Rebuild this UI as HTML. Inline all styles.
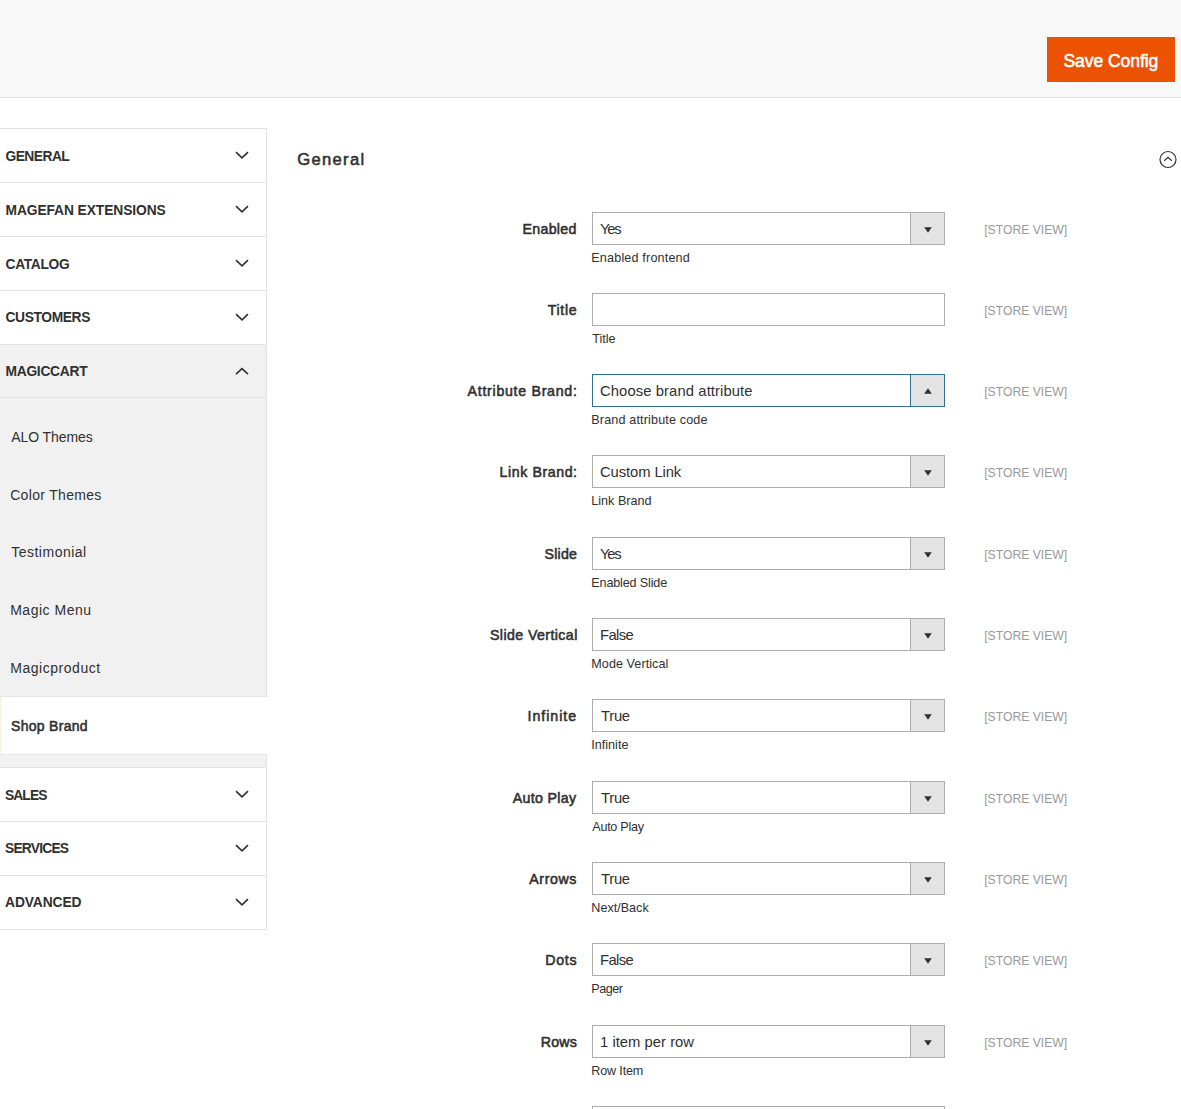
<!DOCTYPE html>
<html><head><meta charset="utf-8"><style>
html,body{margin:0;padding:0;width:1181px;height:1109px;overflow:hidden;background:#fff;font-family:"Liberation Sans", sans-serif;}
</style></head><body>
<div style="position:absolute;left:0;top:0;width:1181px;height:97px;background:#f8f8f8;border-bottom:1px solid #e3e3e3"></div>
<div style="position:absolute;left:1047px;top:37px;width:128px;height:45px;background:#eb5202"></div>
<div style="position:absolute;left:0;top:128px;width:266px;height:53px;border-top:1px solid #e3e3e3;border-right:1px solid #e3e3e3;background:#fff"></div>
<div style="position:absolute;left:234.5px;top:151px;width:14px;height:9px"><svg style="display:block" width="14" height="9" viewBox="0 0 14 9"><path d="M1 1.2 L7 6.8 L13 1.2" fill="none" stroke="#303030" stroke-width="1.6"/></svg></div>
<div style="position:absolute;left:0;top:182px;width:266px;height:53px;border-top:1px solid #e3e3e3;border-right:1px solid #e3e3e3;background:#fff"></div>
<div style="position:absolute;left:234.5px;top:205px;width:14px;height:9px"><svg style="display:block" width="14" height="9" viewBox="0 0 14 9"><path d="M1 1.2 L7 6.8 L13 1.2" fill="none" stroke="#303030" stroke-width="1.6"/></svg></div>
<div style="position:absolute;left:0;top:236px;width:266px;height:53px;border-top:1px solid #e3e3e3;border-right:1px solid #e3e3e3;background:#fff"></div>
<div style="position:absolute;left:234.5px;top:259px;width:14px;height:9px"><svg style="display:block" width="14" height="9" viewBox="0 0 14 9"><path d="M1 1.2 L7 6.8 L13 1.2" fill="none" stroke="#303030" stroke-width="1.6"/></svg></div>
<div style="position:absolute;left:0;top:290px;width:266px;height:53px;border-top:1px solid #e3e3e3;border-right:1px solid #e3e3e3;background:#fff"></div>
<div style="position:absolute;left:234.5px;top:313px;width:14px;height:9px"><svg style="display:block" width="14" height="9" viewBox="0 0 14 9"><path d="M1 1.2 L7 6.8 L13 1.2" fill="none" stroke="#303030" stroke-width="1.6"/></svg></div>
<div style="position:absolute;left:0;top:344px;width:266px;height:53px;border-top:1px solid #e3e3e3;border-right:1px solid #e3e3e3;background:#f1f1f1"></div>
<div style="position:absolute;left:234.5px;top:366.8px;width:14px;height:9px"><svg style="display:block" width="14" height="9" viewBox="0 0 14 9"><path d="M1 7.2 L7 1.6 L13 7.2" fill="none" stroke="#303030" stroke-width="1.6"/></svg></div>
<div style="position:absolute;left:0;top:397px;width:266px;height:370px;border-top:1px solid #e3e3e3;border-right:1px solid #e3e3e3;background:#f1f1f1"></div>
<div style="position:absolute;left:0;top:696px;width:268px;height:57px;border-top:1px solid #e6e6e6;border-bottom:1px solid #e6e6e6;background:#fff"></div>
<div style="position:absolute;left:0;top:697px;width:2px;height:57px;background:#fdf3e4"></div>
<div style="position:absolute;left:0;top:767px;width:266px;height:53px;border-top:1px solid #e3e3e3;border-right:1px solid #e3e3e3;background:#fff"></div>
<div style="position:absolute;left:234.5px;top:790px;width:14px;height:9px"><svg style="display:block" width="14" height="9" viewBox="0 0 14 9"><path d="M1 1.2 L7 6.8 L13 1.2" fill="none" stroke="#303030" stroke-width="1.6"/></svg></div>
<div style="position:absolute;left:0;top:821px;width:266px;height:53px;border-top:1px solid #e3e3e3;border-right:1px solid #e3e3e3;background:#fff"></div>
<div style="position:absolute;left:234.5px;top:844px;width:14px;height:9px"><svg style="display:block" width="14" height="9" viewBox="0 0 14 9"><path d="M1 1.2 L7 6.8 L13 1.2" fill="none" stroke="#303030" stroke-width="1.6"/></svg></div>
<div style="position:absolute;left:0;top:875px;width:266px;height:53px;border-top:1px solid #e3e3e3;border-right:1px solid #e3e3e3;background:#fff"></div>
<div style="position:absolute;left:234.5px;top:898px;width:14px;height:9px"><svg style="display:block" width="14" height="9" viewBox="0 0 14 9"><path d="M1 1.2 L7 6.8 L13 1.2" fill="none" stroke="#303030" stroke-width="1.6"/></svg></div>
<div style="position:absolute;left:0;top:929px;width:267px;height:1px;background:#e3e3e3"></div>
<svg style="position:absolute;left:1158px;top:150px" width="20" height="20" viewBox="0 0 20 20"><circle cx="10" cy="9.5" r="8" fill="none" stroke="#303030" stroke-width="1.2"/><path d="M6.2 10.8 L10 7.3 L13.8 10.8" fill="none" stroke="#303030" stroke-width="1.2"/></svg>
<div style="position:absolute;left:592px;top:212px;width:351px;height:31px;border:1px solid #adadad;background:#fff"></div>
<div style="position:absolute;left:910px;top:213px;width:33px;height:31px;border-left:1px solid #adadad;background:#e3e3e3"></div>
<svg style="position:absolute;left:924px;top:226.5px" width="8" height="6" viewBox="0 0 8 6"><path d="M0.2 0.3 L7.8 0.3 L4 5.7 Z" fill="#303030"/></svg>
<div style="position:absolute;left:592px;top:293px;width:351px;height:31px;border:1px solid #adadad;background:#fff"></div>
<div style="position:absolute;left:592px;top:374px;width:351px;height:31px;border:1px solid #2f6f8f;background:#fff"></div>
<div style="position:absolute;left:910px;top:375px;width:33px;height:31px;border-left:1px solid #2f6f8f;background:#e3e3e3"></div>
<svg style="position:absolute;left:924px;top:387.5px" width="8" height="6" viewBox="0 0 8 6"><path d="M0.2 5.7 L4 0.3 L7.8 5.7 Z" fill="#303030"/></svg>
<div style="position:absolute;left:592px;top:455px;width:351px;height:31px;border:1px solid #adadad;background:#fff"></div>
<div style="position:absolute;left:910px;top:456px;width:33px;height:31px;border-left:1px solid #adadad;background:#e3e3e3"></div>
<svg style="position:absolute;left:924px;top:469.5px" width="8" height="6" viewBox="0 0 8 6"><path d="M0.2 0.3 L7.8 0.3 L4 5.7 Z" fill="#303030"/></svg>
<div style="position:absolute;left:592px;top:537px;width:351px;height:31px;border:1px solid #adadad;background:#fff"></div>
<div style="position:absolute;left:910px;top:538px;width:33px;height:31px;border-left:1px solid #adadad;background:#e3e3e3"></div>
<svg style="position:absolute;left:924px;top:551.5px" width="8" height="6" viewBox="0 0 8 6"><path d="M0.2 0.3 L7.8 0.3 L4 5.7 Z" fill="#303030"/></svg>
<div style="position:absolute;left:592px;top:618px;width:351px;height:31px;border:1px solid #adadad;background:#fff"></div>
<div style="position:absolute;left:910px;top:619px;width:33px;height:31px;border-left:1px solid #adadad;background:#e3e3e3"></div>
<svg style="position:absolute;left:924px;top:632.5px" width="8" height="6" viewBox="0 0 8 6"><path d="M0.2 0.3 L7.8 0.3 L4 5.7 Z" fill="#303030"/></svg>
<div style="position:absolute;left:592px;top:699px;width:351px;height:31px;border:1px solid #adadad;background:#fff"></div>
<div style="position:absolute;left:910px;top:700px;width:33px;height:31px;border-left:1px solid #adadad;background:#e3e3e3"></div>
<svg style="position:absolute;left:924px;top:713.5px" width="8" height="6" viewBox="0 0 8 6"><path d="M0.2 0.3 L7.8 0.3 L4 5.7 Z" fill="#303030"/></svg>
<div style="position:absolute;left:592px;top:781px;width:351px;height:31px;border:1px solid #adadad;background:#fff"></div>
<div style="position:absolute;left:910px;top:782px;width:33px;height:31px;border-left:1px solid #adadad;background:#e3e3e3"></div>
<svg style="position:absolute;left:924px;top:795.5px" width="8" height="6" viewBox="0 0 8 6"><path d="M0.2 0.3 L7.8 0.3 L4 5.7 Z" fill="#303030"/></svg>
<div style="position:absolute;left:592px;top:862px;width:351px;height:31px;border:1px solid #adadad;background:#fff"></div>
<div style="position:absolute;left:910px;top:863px;width:33px;height:31px;border-left:1px solid #adadad;background:#e3e3e3"></div>
<svg style="position:absolute;left:924px;top:876.5px" width="8" height="6" viewBox="0 0 8 6"><path d="M0.2 0.3 L7.8 0.3 L4 5.7 Z" fill="#303030"/></svg>
<div style="position:absolute;left:592px;top:943px;width:351px;height:31px;border:1px solid #adadad;background:#fff"></div>
<div style="position:absolute;left:910px;top:944px;width:33px;height:31px;border-left:1px solid #adadad;background:#e3e3e3"></div>
<svg style="position:absolute;left:924px;top:957.5px" width="8" height="6" viewBox="0 0 8 6"><path d="M0.2 0.3 L7.8 0.3 L4 5.7 Z" fill="#303030"/></svg>
<div style="position:absolute;left:592px;top:1025px;width:351px;height:31px;border:1px solid #adadad;background:#fff"></div>
<div style="position:absolute;left:910px;top:1026px;width:33px;height:31px;border-left:1px solid #adadad;background:#e3e3e3"></div>
<svg style="position:absolute;left:924px;top:1039.5px" width="8" height="6" viewBox="0 0 8 6"><path d="M0.2 0.3 L7.8 0.3 L4 5.7 Z" fill="#303030"/></svg>
<div style="position:absolute;left:592px;top:1106px;width:351px;height:31px;border:1px solid #adadad;background:#fff"></div>
<div style="position:absolute;left:1063.50px;top:50.54px;font-size:17.5px;line-height:20px;font-weight:400;-webkit-text-stroke:0.55px currentColor;color:#ffffff;letter-spacing:-0.050px;white-space:nowrap">Save Config</div>
<div style="position:absolute;left:5.50px;top:147.12px;font-size:13.8px;line-height:20px;font-weight:700;color:#303030;letter-spacing:-0.533px;white-space:nowrap">GENERAL</div>
<div style="position:absolute;left:5.50px;top:201.22px;font-size:13.8px;line-height:20px;font-weight:700;color:#303030;letter-spacing:-0.088px;white-space:nowrap">MAGEFAN EXTENSIONS</div>
<div style="position:absolute;left:5.50px;top:254.52px;font-size:13.8px;line-height:20px;font-weight:700;color:#303030;letter-spacing:-0.333px;white-space:nowrap">CATALOG</div>
<div style="position:absolute;left:5.50px;top:307.82px;font-size:13.8px;line-height:20px;font-weight:700;color:#303030;letter-spacing:-0.375px;white-space:nowrap">CUSTOMERS</div>
<div style="position:absolute;left:5.50px;top:362.42px;font-size:13.8px;line-height:20px;font-weight:700;color:#303030;letter-spacing:-0.275px;white-space:nowrap">MAGICCART</div>
<div style="position:absolute;left:5.00px;top:785.92px;font-size:13.8px;line-height:20px;font-weight:700;color:#303030;letter-spacing:-0.900px;white-space:nowrap">SALES</div>
<div style="position:absolute;left:5.00px;top:839.02px;font-size:13.8px;line-height:20px;font-weight:700;color:#303030;letter-spacing:-0.786px;white-space:nowrap">SERVICES</div>
<div style="position:absolute;left:5.00px;top:892.62px;font-size:13.8px;line-height:20px;font-weight:700;color:#303030;letter-spacing:-0.086px;white-space:nowrap">ADVANCED</div>
<div style="position:absolute;left:11.20px;top:427.05px;font-size:14px;line-height:20px;font-weight:400;color:#303030;letter-spacing:-0.067px;white-space:nowrap">ALO Themes</div>
<div style="position:absolute;left:10.20px;top:484.95px;font-size:14px;line-height:20px;font-weight:400;color:#303030;letter-spacing:0.318px;white-space:nowrap">Color Themes</div>
<div style="position:absolute;left:11.20px;top:542.05px;font-size:14px;line-height:20px;font-weight:400;color:#303030;letter-spacing:0.500px;white-space:nowrap">Testimonial</div>
<div style="position:absolute;left:10.20px;top:599.95px;font-size:14px;line-height:20px;font-weight:400;color:#303030;letter-spacing:0.522px;white-space:nowrap">Magic Menu</div>
<div style="position:absolute;left:10.20px;top:657.65px;font-size:14px;line-height:20px;font-weight:400;color:#303030;letter-spacing:0.536px;white-space:nowrap">Magicproduct</div>
<div style="position:absolute;left:11.00px;top:715.55px;font-size:14px;line-height:20px;font-weight:400;-webkit-text-stroke:0.55px currentColor;color:#303030;letter-spacing:0.300px;white-space:nowrap">Shop Brand</div>
<div style="position:absolute;left:297.20px;top:149.65px;font-size:16.6px;line-height:20px;font-weight:400;-webkit-text-stroke:0.55px currentColor;color:#303030;letter-spacing:1.333px;white-space:nowrap">General</div>
<div style="position:absolute;left:522.50px;top:218.88px;font-size:14.2px;line-height:20px;font-weight:400;-webkit-text-stroke:0.55px currentColor;color:#303030;letter-spacing:0.300px;white-space:nowrap">Enabled</div>
<div style="position:absolute;left:984.20px;top:219.77px;font-size:12.2px;line-height:20px;font-weight:400;color:#999999;letter-spacing:0.000px;white-space:nowrap">[STORE VIEW]</div>
<div style="position:absolute;left:600.00px;top:218.67px;font-size:14.8px;line-height:20px;font-weight:400;color:#303030;letter-spacing:-1.250px;white-space:nowrap">Yes</div>
<div style="position:absolute;left:591.30px;top:247.83px;font-size:12.6px;line-height:20px;font-weight:400;color:#303030;letter-spacing:0.167px;white-space:nowrap">Enabled frontend</div>
<div style="position:absolute;left:547.80px;top:299.88px;font-size:14.2px;line-height:20px;font-weight:400;-webkit-text-stroke:0.55px currentColor;color:#303030;letter-spacing:0.625px;white-space:nowrap">Title</div>
<div style="position:absolute;left:984.20px;top:300.77px;font-size:12.2px;line-height:20px;font-weight:400;color:#999999;letter-spacing:0.000px;white-space:nowrap">[STORE VIEW]</div>
<div style="position:absolute;left:592.30px;top:328.83px;font-size:12.6px;line-height:20px;font-weight:400;color:#303030;letter-spacing:-0.050px;white-space:nowrap">Title</div>
<div style="position:absolute;left:467.60px;top:380.88px;font-size:14.2px;line-height:20px;font-weight:400;-webkit-text-stroke:0.55px currentColor;color:#303030;letter-spacing:0.713px;white-space:nowrap">Attribute Brand:</div>
<div style="position:absolute;left:984.20px;top:381.77px;font-size:12.2px;line-height:20px;font-weight:400;color:#999999;letter-spacing:0.000px;white-space:nowrap">[STORE VIEW]</div>
<div style="position:absolute;left:600.00px;top:380.67px;font-size:14.8px;line-height:20px;font-weight:400;color:#303030;letter-spacing:0.095px;white-space:nowrap">Choose brand attribute</div>
<div style="position:absolute;left:591.30px;top:409.83px;font-size:12.6px;line-height:20px;font-weight:400;color:#303030;letter-spacing:0.147px;white-space:nowrap">Brand attribute code</div>
<div style="position:absolute;left:499.60px;top:461.88px;font-size:14.2px;line-height:20px;font-weight:400;-webkit-text-stroke:0.55px currentColor;color:#303030;letter-spacing:0.570px;white-space:nowrap">Link Brand:</div>
<div style="position:absolute;left:984.20px;top:462.77px;font-size:12.2px;line-height:20px;font-weight:400;color:#999999;letter-spacing:0.000px;white-space:nowrap">[STORE VIEW]</div>
<div style="position:absolute;left:600.00px;top:461.67px;font-size:14.8px;line-height:20px;font-weight:400;color:#303030;letter-spacing:-0.100px;white-space:nowrap">Custom Link</div>
<div style="position:absolute;left:591.30px;top:490.83px;font-size:12.6px;line-height:20px;font-weight:400;color:#303030;letter-spacing:0.000px;white-space:nowrap">Link Brand</div>
<div style="position:absolute;left:544.60px;top:543.88px;font-size:14.2px;line-height:20px;font-weight:400;-webkit-text-stroke:0.55px currentColor;color:#303030;letter-spacing:0.175px;white-space:nowrap">Slide</div>
<div style="position:absolute;left:984.20px;top:544.77px;font-size:12.2px;line-height:20px;font-weight:400;color:#999999;letter-spacing:0.000px;white-space:nowrap">[STORE VIEW]</div>
<div style="position:absolute;left:600.00px;top:543.67px;font-size:14.8px;line-height:20px;font-weight:400;color:#303030;letter-spacing:-1.250px;white-space:nowrap">Yes</div>
<div style="position:absolute;left:591.30px;top:572.83px;font-size:12.6px;line-height:20px;font-weight:400;color:#303030;letter-spacing:-0.150px;white-space:nowrap">Enabled Slide</div>
<div style="position:absolute;left:490.00px;top:624.88px;font-size:14.2px;line-height:20px;font-weight:400;-webkit-text-stroke:0.55px currentColor;color:#303030;letter-spacing:0.408px;white-space:nowrap">Slide Vertical</div>
<div style="position:absolute;left:984.20px;top:625.77px;font-size:12.2px;line-height:20px;font-weight:400;color:#999999;letter-spacing:0.000px;white-space:nowrap">[STORE VIEW]</div>
<div style="position:absolute;left:600.00px;top:624.67px;font-size:14.8px;line-height:20px;font-weight:400;color:#303030;letter-spacing:-0.625px;white-space:nowrap">False</div>
<div style="position:absolute;left:591.30px;top:653.83px;font-size:12.6px;line-height:20px;font-weight:400;color:#303030;letter-spacing:0.058px;white-space:nowrap">Mode Vertical</div>
<div style="position:absolute;left:527.60px;top:705.88px;font-size:14.2px;line-height:20px;font-weight:400;-webkit-text-stroke:0.55px currentColor;color:#303030;letter-spacing:0.957px;white-space:nowrap">Infinite</div>
<div style="position:absolute;left:984.20px;top:706.77px;font-size:12.2px;line-height:20px;font-weight:400;color:#999999;letter-spacing:0.000px;white-space:nowrap">[STORE VIEW]</div>
<div style="position:absolute;left:601.00px;top:705.67px;font-size:14.8px;line-height:20px;font-weight:400;color:#303030;letter-spacing:-0.267px;white-space:nowrap">True</div>
<div style="position:absolute;left:591.30px;top:734.83px;font-size:12.6px;line-height:20px;font-weight:400;color:#303030;letter-spacing:0.000px;white-space:nowrap">Infinite</div>
<div style="position:absolute;left:512.80px;top:787.88px;font-size:14.2px;line-height:20px;font-weight:400;-webkit-text-stroke:0.55px currentColor;color:#303030;letter-spacing:0.312px;white-space:nowrap">Auto Play</div>
<div style="position:absolute;left:984.20px;top:788.77px;font-size:12.2px;line-height:20px;font-weight:400;color:#999999;letter-spacing:0.000px;white-space:nowrap">[STORE VIEW]</div>
<div style="position:absolute;left:601.00px;top:787.67px;font-size:14.8px;line-height:20px;font-weight:400;color:#303030;letter-spacing:-0.267px;white-space:nowrap">True</div>
<div style="position:absolute;left:592.30px;top:816.83px;font-size:12.6px;line-height:20px;font-weight:400;color:#303030;letter-spacing:-0.275px;white-space:nowrap">Auto Play</div>
<div style="position:absolute;left:529.30px;top:868.88px;font-size:14.2px;line-height:20px;font-weight:400;-webkit-text-stroke:0.55px currentColor;color:#303030;letter-spacing:0.600px;white-space:nowrap">Arrows</div>
<div style="position:absolute;left:984.20px;top:869.77px;font-size:12.2px;line-height:20px;font-weight:400;color:#999999;letter-spacing:0.000px;white-space:nowrap">[STORE VIEW]</div>
<div style="position:absolute;left:601.00px;top:868.67px;font-size:14.8px;line-height:20px;font-weight:400;color:#303030;letter-spacing:-0.267px;white-space:nowrap">True</div>
<div style="position:absolute;left:591.30px;top:897.83px;font-size:12.6px;line-height:20px;font-weight:400;color:#303030;letter-spacing:0.000px;white-space:nowrap">Next/Back</div>
<div style="position:absolute;left:545.30px;top:949.88px;font-size:14.2px;line-height:20px;font-weight:400;-webkit-text-stroke:0.55px currentColor;color:#303030;letter-spacing:0.667px;white-space:nowrap">Dots</div>
<div style="position:absolute;left:984.20px;top:950.77px;font-size:12.2px;line-height:20px;font-weight:400;color:#999999;letter-spacing:0.000px;white-space:nowrap">[STORE VIEW]</div>
<div style="position:absolute;left:600.00px;top:949.67px;font-size:14.8px;line-height:20px;font-weight:400;color:#303030;letter-spacing:-0.625px;white-space:nowrap">False</div>
<div style="position:absolute;left:591.30px;top:978.83px;font-size:12.6px;line-height:20px;font-weight:400;color:#303030;letter-spacing:-0.500px;white-space:nowrap">Pager</div>
<div style="position:absolute;left:540.80px;top:1031.88px;font-size:14.2px;line-height:20px;font-weight:400;-webkit-text-stroke:0.55px currentColor;color:#303030;letter-spacing:0.167px;white-space:nowrap">Rows</div>
<div style="position:absolute;left:984.20px;top:1032.77px;font-size:12.2px;line-height:20px;font-weight:400;color:#999999;letter-spacing:0.000px;white-space:nowrap">[STORE VIEW]</div>
<div style="position:absolute;left:600.00px;top:1031.67px;font-size:14.8px;line-height:20px;font-weight:400;color:#303030;letter-spacing:0.023px;white-space:nowrap">1 item per row</div>
<div style="position:absolute;left:591.30px;top:1060.83px;font-size:12.6px;line-height:20px;font-weight:400;color:#303030;letter-spacing:-0.171px;white-space:nowrap">Row Item</div>

</body></html>
